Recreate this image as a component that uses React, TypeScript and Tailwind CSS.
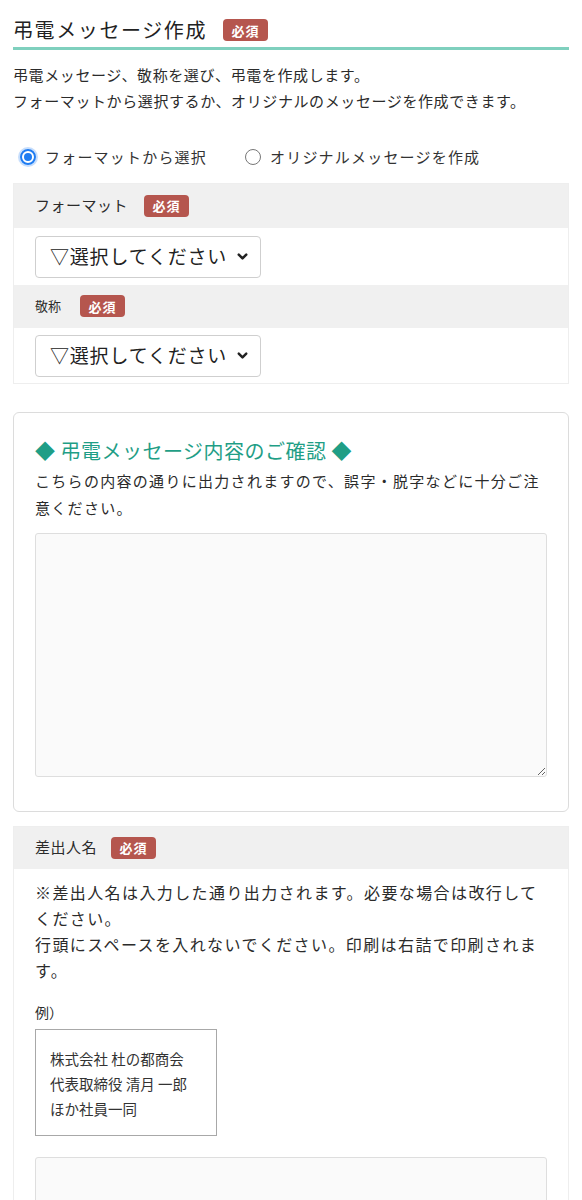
import React, { useState } from 'react';
import { ChevronDown } from 'lucide-react';

const FONT = '"Noto Sans CJK JP", "Noto Sans", sans-serif';

function Required() {
  return (
    <span className="inline-flex items-center justify-center w-[45px] h-[22px] rounded-[4px] bg-[#b5564e] text-white text-[13px] font-bold leading-none tracking-[1px]">
      必須
    </span>
  );
}

function FakeSelect() {
  return (
    <div className="flex items-center justify-between w-[226px] h-[42px] pl-[14px] pr-[10px] bg-white border border-[#cfcfcf] rounded-[4px] text-[19px] tracking-[0.8px] text-[#222]">
      <span>▽選択してください</span>
      <ChevronDown className="w-[15px] h-[15px]" strokeWidth={4} />
    </div>
  );
}

function Radio({ checked, label, onClick }: { checked: boolean; label: string; onClick: () => void }) {
  return (
    <button type="button" onClick={onClick} className="flex items-center gap-[9px]">
      {checked ? (
        <span className="flex items-center justify-center w-[16px] h-[16px] rounded-full border-[2px] border-[#1e7cf2] shadow-[0_0_0_2px_rgba(30,124,242,0.25)]">
          <span className="w-[8px] h-[8px] rounded-full bg-[#1e7cf2]" />
        </span>
      ) : (
        <span className="w-[16px] h-[16px] rounded-full border border-[#777] bg-white" />
      )}
      <span className="text-[15px] tracking-[1.2px] text-[#333]">{label}</span>
    </button>
  );
}

export default function App() {
  const [mode, setMode] = useState<'format' | 'original'>('format');

  return (
    <div className="w-[582px] min-h-screen bg-white px-[13px] text-[#2b2b2b]" style={{ fontFamily: FONT }}>
      <div className="flex items-center gap-[16px] pt-[15px] pb-[2px] border-b-[3px] border-[#7fd0be]">
        <h1 className="text-[20px] tracking-[1.6px] text-[#222]">弔電メッセージ作成</h1>
        <Required />
      </div>

      <div className="mt-[12px] text-[15px] leading-[26px] tracking-[0.6px]">
        <p>弔電メッセージ、敬称を選び、弔電を作成します。</p>
        <p>フォーマットから選択するか、オリジナルのメッセージを作成できます。</p>
      </div>

      <div className="flex items-center gap-[38px] mt-[32px] pl-[7px]">
        <Radio checked={mode === 'format'} label="フォーマットから選択" onClick={() => setMode('format')} />
        <Radio checked={mode === 'original'} label="オリジナルメッセージを作成" onClick={() => setMode('original')} />
      </div>

      <div className="mt-[14px] border border-[#eeeeee]">
        <div className="flex items-center gap-[16px] h-[44px] px-[21px] bg-[#f0f0f0]">
          <span className="text-[15px] tracking-[0.5px]">フォーマット</span>
          <Required />
        </div>
        <div className="px-[21px] pt-[8px] pb-[7px]">
          <FakeSelect />
        </div>
        <div className="flex items-center gap-[19px] h-[43px] px-[21px] bg-[#f0f0f0]">
          <span className="text-[13px]">敬称</span>
          <Required />
        </div>
        <div className="px-[21px] pt-[7px] pb-[6px]">
          <FakeSelect />
        </div>
      </div>

      <div className="mt-[28px] border border-[#dcdcdc] rounded-[6px] px-[21px] pt-[24px] pb-[34px]">
        <h2 className="text-[20px] leading-[28px] tracking-[0.5px] text-[#1f9e86]">◆ 弔電メッセージ内容のご確認 ◆</h2>
        <p className="mt-[2px] text-[15px] leading-[27px] tracking-[1.3px]">
          こちらの内容の通りに出力されますので、誤字・脱字などに十分ご注意ください。
        </p>
        <textarea
          readOnly
          className="block mt-[12px] w-full h-[244px] bg-[#fafafa] border border-[#dedede] rounded-[3px] outline-none"
        />
      </div>

      <div className="mt-[14px] border border-[#eeeeee] border-b-0">
        <div className="flex items-center gap-[14px] h-[42px] px-[21px] bg-[#f0f0f0]">
          <span className="text-[15px] tracking-[0.5px]">差出人名</span>
          <Required />
        </div>
        <div className="px-[21px] pt-[10px] pb-[24px]">
          <p className="text-[16px] leading-[26px] tracking-[1.4px]">
            ※差出人名は入力した通り出力されます。必要な場合は改行してください。
          </p>
          <p className="text-[16px] leading-[26px] tracking-[1.4px]">
            行頭にスペースを入れないでください。印刷は右詰で印刷されます。
          </p>
          <p className="mt-[19px] text-[14px] leading-[20px]">例）</p>
          <div className="mt-[7px] w-[182px] border border-[#a8a8a8] pl-[14px] pt-[16px] pb-[14px] text-[14.5px] leading-[25px] text-[#333]">
            <p>株式会社 杜の都商会</p>
            <p>代表取締役 清月 一郎</p>
            <p>ほか社員一同</p>
          </div>
          <textarea
            readOnly
            className="block mt-[21px] w-full h-[120px] bg-[#fafafa] border border-[#dedede] rounded-[3px] outline-none"
          />
        </div>
      </div>
    </div>
  );
}
